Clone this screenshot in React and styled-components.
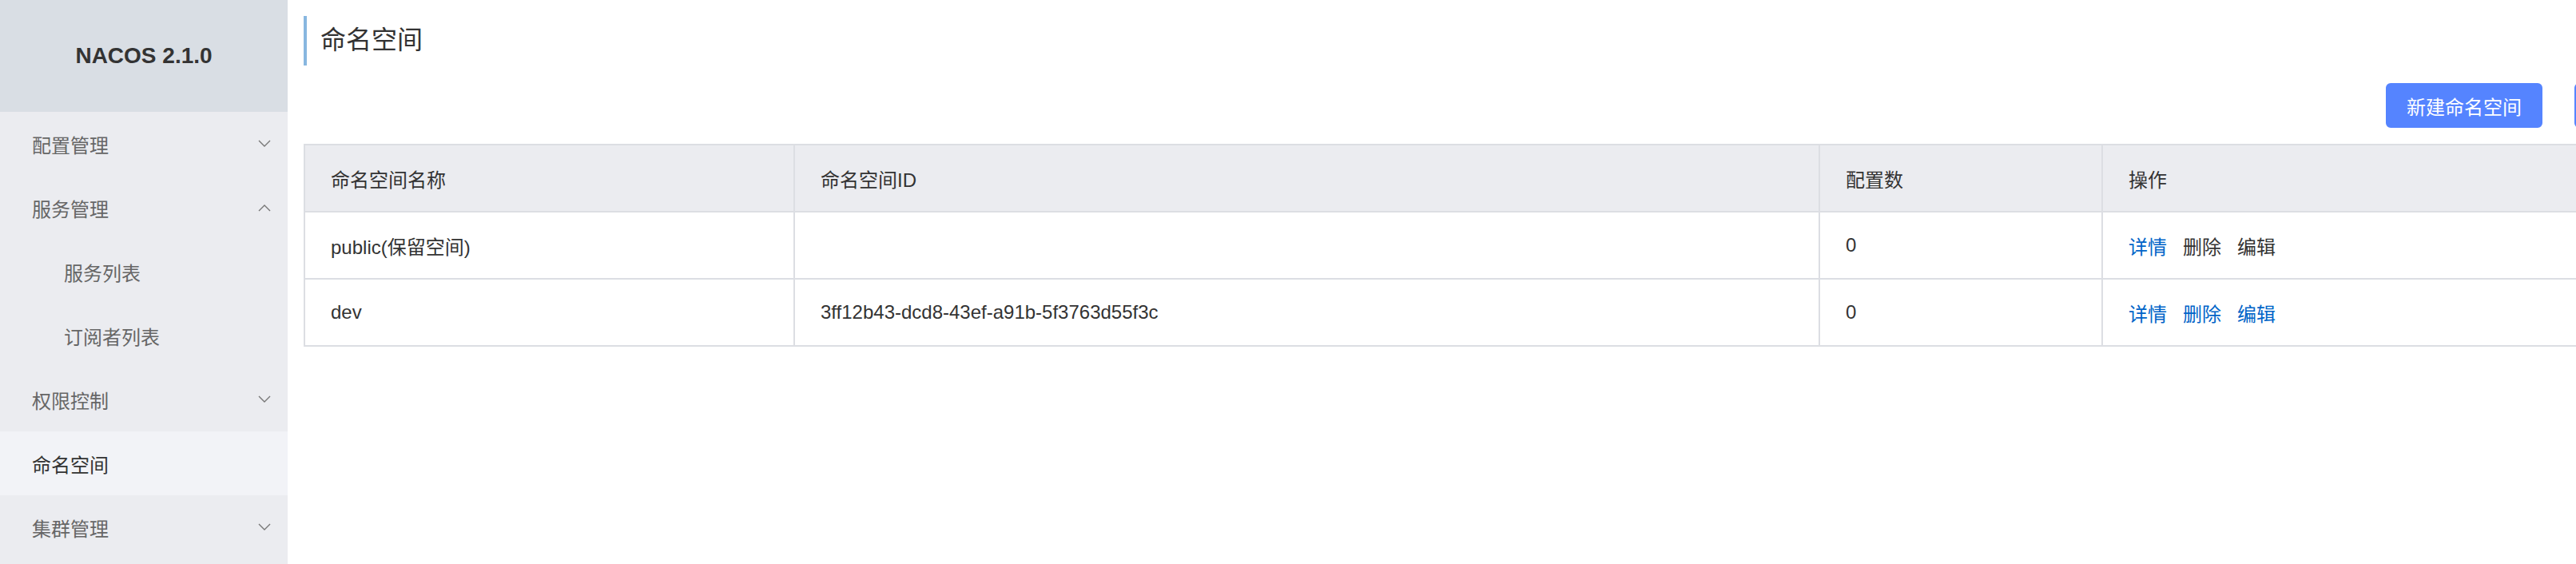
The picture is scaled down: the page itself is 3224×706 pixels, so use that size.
import React from 'react';
import styled, { createGlobalStyle } from 'styled-components';
import { RefreshCw } from 'lucide-react';

const GlobalStyle = createGlobalStyle`
  html, body {
    margin: 0;
    padding: 0;
    overflow: hidden;
    background: #fff;
  }
  body {
    font-family: "Liberation Sans", Arial, "Noto Sans CJK SC", sans-serif;
    color: #333;
  }
`;

const Layout = styled.div`
  display: flex;
  height: 100vh;
`;

const Sidebar = styled.aside`
  width: 360px;
  flex-shrink: 0;
  display: flex;
  flex-direction: column;
  background: #ebecf0;
`;

const Brand = styled.div`
  height: 140px;
  display: flex;
  align-items: center;
  justify-content: center;
  background: #d9dee4;
  font-size: 28px;
  font-weight: bold;
  color: #333;
`;

const MenuItem = styled.div`
  height: 80px;
  display: flex;
  align-items: center;
  justify-content: space-between;
  padding-left: ${p => (p.$sub ? 80 : 40)}px;
  padding-right: 21px;
  font-size: 24px;
  color: ${p => (p.$active ? '#333' : '#666')};
  background: ${p => (p.$active ? '#f2f3f7' : 'transparent')};
`;

const Main = styled.main`
  flex: 1;
  min-width: 0;
  padding: 20px 0 0 20px;
`;

const Content = styled.div`
  width: 2980px;
`;

const PageTitle = styled.h1`
  margin: 0;
  height: 62px;
  line-height: 60px;
  border-left: 4px solid #88b7e0;
  padding-left: 17px;
  font-size: 32px;
  font-weight: normal;
  color: #333;
`;

const Toolbar = styled.div`
  display: flex;
  justify-content: flex-end;
  gap: 40px;
  margin-top: 22px;
`;

const Button = styled.button`
  height: 56px;
  padding: 0 24px;
  border-radius: 6px;
  font-family: inherit;
  font-size: 24px;
  border: 2px solid #5584ff;
  background: #5584ff;
  color: #fff;
`;

const IconButton = styled.button`
  width: 138px;
  height: 56px;
  display: flex;
  align-items: center;
  justify-content: center;
  border-radius: 6px;
  border: 2px solid #5584ff;
  background: #fff;
  color: #5584ff;
`;

const Table = styled.table`
  margin-top: 20px;
  width: 100%;
  table-layout: fixed;
  border-collapse: collapse;
  font-size: 24px;
  color: #333;

  th, td {
    border: 2px solid #dcdee3;
    padding: 0 32px;
    text-align: left;
    white-space: nowrap;
  }
  th {
    height: 82px;
    background: #ebecf0;
    font-weight: normal;
  }
  td {
    height: 82px;
  }
`;

const Actions = styled.div`
  display: flex;
  gap: 20px;
`;

const Link = styled.span`
  color: ${p => (p.$disabled ? '#333' : '#0064c8')};
`;

const Chevron = ({ up }) => (
  <svg width="16" height="10" viewBox="0 0 16 10" fill="none">
    <polyline
      points={up ? '1,9 8,2 15,9' : '1,1 8,8 15,1'}
      stroke="#777"
      strokeWidth="1.4"
    />
  </svg>
);

const menu = [
  { label: '配置管理', arrow: 'down' },
  { label: '服务管理', arrow: 'up' },
  { label: '服务列表', sub: true },
  { label: '订阅者列表', sub: true },
  { label: '权限控制', arrow: 'down' },
  { label: '命名空间', active: true },
  { label: '集群管理', arrow: 'down' },
];

const rows = [
  { name: 'public(保留空间)', id: '', count: 0, locked: true },
  { name: 'dev', id: '3ff12b43-dcd8-43ef-a91b-5f3763d55f3c', count: 0 },
];

const App = () => {
  return (
    <>
      <GlobalStyle />
      <Layout>
        <Sidebar>
          <Brand>NACOS 2.1.0</Brand>
          {menu.map(m => (
            <MenuItem key={m.label} $sub={m.sub} $active={m.active}>
              <span>{m.label}</span>
              {m.arrow && <Chevron up={m.arrow === 'up'} />}
            </MenuItem>
          ))}
        </Sidebar>
        <Main>
          <Content>
            <PageTitle>命名空间</PageTitle>
            <Toolbar>
              <Button>新建命名空间</Button>
              <IconButton aria-label="刷新">
                <RefreshCw size={24} />
              </IconButton>
            </Toolbar>
            <Table>
              <colgroup>
                <col style={{ width: 613 }} />
                <col style={{ width: 1283 }} />
                <col style={{ width: 354 }} />
                <col />
              </colgroup>
              <thead>
                <tr>
                  <th>命名空间名称</th>
                  <th>命名空间ID</th>
                  <th>配置数</th>
                  <th>操作</th>
                </tr>
              </thead>
              <tbody>
                {rows.map(r => (
                  <tr key={r.name}>
                    <td>{r.name}</td>
                    <td>{r.id}</td>
                    <td>{r.count}</td>
                    <td>
                      <Actions>
                        <Link>详情</Link>
                        <Link $disabled={r.locked}>删除</Link>
                        <Link $disabled={r.locked}>编辑</Link>
                      </Actions>
                    </td>
                  </tr>
                ))}
              </tbody>
            </Table>
          </Content>
        </Main>
      </Layout>
    </>
  );
};

export default App;
